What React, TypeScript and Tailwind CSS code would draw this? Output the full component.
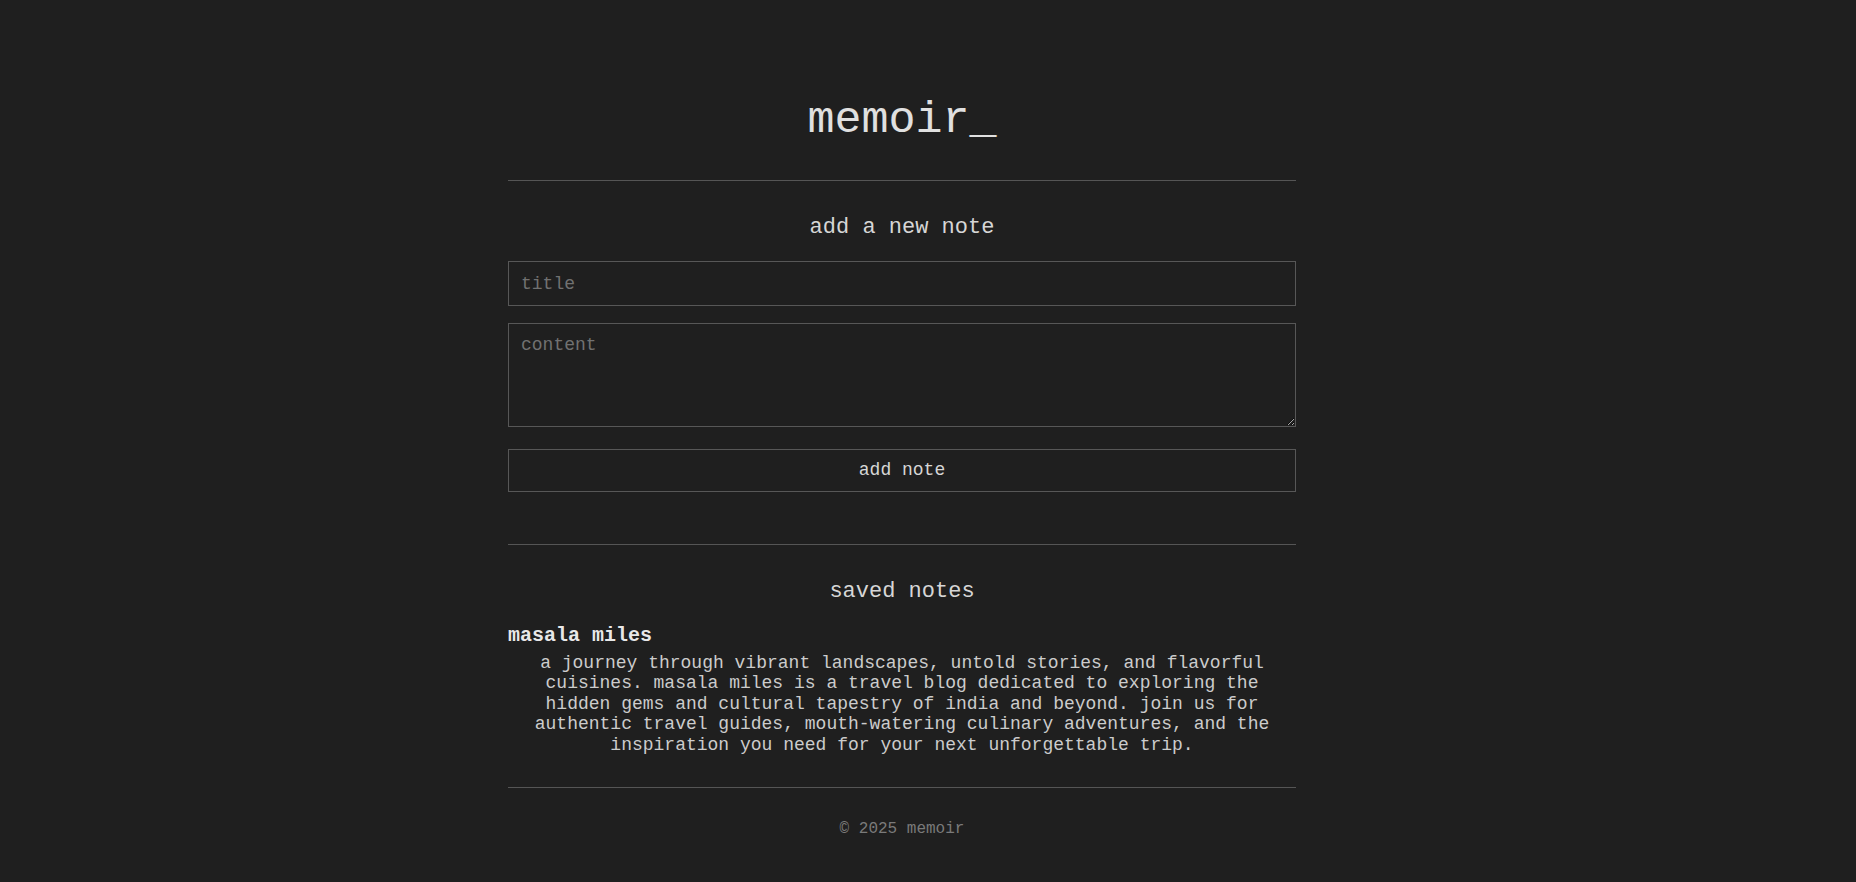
import { useState } from 'react';

type Note = {
	title: string;
	content: string;
};

const initialNotes: Note[] = [
	{
		title: 'masala miles',
		content:
			'a journey through vibrant landscapes, untold stories, and flavorful cuisines. masala miles is a travel blog dedicated to exploring the hidden gems and cultural tapestry of india and beyond. join us for authentic travel guides, mouth-watering culinary adventures, and the inspiration you need for your next unforgettable trip.',
	},
];

export default function App() {
	const [notes, setNotes] = useState<Note[]>(initialNotes);
	const [title, setTitle] = useState('');
	const [content, setContent] = useState('');

	const handleAdd = () => {
		if (!title.trim() && !content.trim()) return;
		setNotes([...notes, { title, content }]);
		setTitle('');
		setContent('');
	};

	return (
		<div className="min-h-screen bg-[#1f1f1f] pr-[52px] font-['Liberation_Mono','Courier_New',monospace] text-[#d8d8d8]">
			<div className="mx-auto flex w-[788px] flex-col pt-[95px] pb-10">
				<h1 className="text-center text-[45px] leading-[51px] font-normal text-[#e0e0e0]">
					memoir_
				</h1>

				<hr className="mt-[34px] border-t border-[#555555]" />

				<h2 className="mt-[34px] text-center text-[22px] leading-[25px] text-[#d6d6d6]">
					add a new note
				</h2>
				<input
					type="text"
					placeholder="title"
					value={title}
					onChange={(e) => setTitle(e.target.value)}
					className="mt-[21px] block h-[45px] w-full border border-[#575757] bg-transparent px-3 text-[18px] text-[#d8d8d8] outline-none placeholder:text-[#717171]"
				/>
				<textarea
					placeholder="content"
					value={content}
					onChange={(e) => setContent(e.target.value)}
					className="mt-[17px] block h-[104px] w-full border border-[#575757] bg-transparent px-3 py-[11px] text-[18px] leading-[20px] text-[#d8d8d8] outline-none placeholder:text-[#717171]"
				/>
				<button
					type="button"
					onClick={handleAdd}
					className="mt-[22px] block h-[43px] w-full cursor-pointer border border-[#575757] bg-transparent text-[18px] text-[#d6d6d6]"
				>
					add note
				</button>

				<hr className="mt-[52px] border-t border-[#555555]" />

				<h2 className="mt-[34px] text-center text-[22px] leading-[25px] text-[#d6d6d6]">
					saved notes
				</h2>
				{notes.map((note, i) => (
					<div key={i} className="mt-[20px]">
						<h3 className="text-[20px] leading-[23px] font-bold text-[#e8e8e8]">
							{note.title}
						</h3>
						<p className="mt-[6px] px-2 text-center text-[18px] leading-[20.4px] text-[#cccccc]">
							{note.content}
						</p>
					</div>
				))}

				<hr className="mt-[32px] border-t border-[#555555]" />

				<footer className="mt-[32px] text-center text-[16px] leading-[18px] text-[#7a7a7a]">
					© 2025 memoir
				</footer>
			</div>
		</div>
	);
}
